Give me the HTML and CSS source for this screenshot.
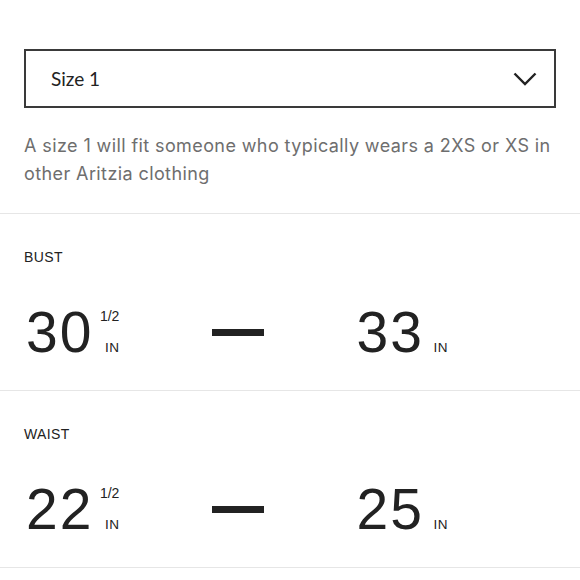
FILE: index.html
```html
<!DOCTYPE html>
<html>
<head>
<meta charset="utf-8">
<link rel="stylesheet" href="styles.css">
</head>
<body>
<div class="top">
  <div class="select">
    <span class="select-label">Size 1</span>
    <svg class="chevron" width="24" height="14" viewBox="0 0 24 14"><path d="M1.5 1.5 L12 12 L22.5 1.5" fill="none" stroke="#222" stroke-width="2.4"/></svg>
  </div>
  <p class="desc">A size 1 will fit someone who typically wears a 2XS or XS in other Aritzia clothing</p>
</div>
<section class="measure">
  <div class="label">BUST</div>
  <div class="row">
    <div class="value">
      <span class="num">30</span>
      <span class="frac"><span class="half">1/2</span><span class="unit">IN</span></span>
    </div>
    <div class="dash"></div>
    <div class="value value-right">
      <span class="num">33</span>
      <span class="frac"><span class="half"></span><span class="unit">IN</span></span>
    </div>
  </div>
</section>
<section class="measure">
  <div class="label">WAIST</div>
  <div class="row">
    <div class="value">
      <span class="num">22</span>
      <span class="frac"><span class="half">1/2</span><span class="unit">IN</span></span>
    </div>
    <div class="dash"></div>
    <div class="value value-right">
      <span class="num">25</span>
      <span class="frac"><span class="half"></span><span class="unit">IN</span></span>
    </div>
  </div>
</section>
</body>
</html>
```
FILE: styles.css
```css
html, body {
  margin: 0;
  padding: 0;
  background: #fff;
}
body {
  font-family: "Liberation Sans", Arial, sans-serif;
  color: #222;
}
.top {
  padding: 49px 24px 0;
}
.select {
  box-sizing: border-box;
  height: 59px;
  border: 2px solid #3a3a3a;
  display: flex;
  align-items: center;
  justify-content: space-between;
  padding: 0 17px 0 25px;
}
.select-label {
  font-family: Lato, "Liberation Sans", sans-serif;
  font-size: 19px;
  color: #222;
}
.chevron {
  display: block;
}
.desc {
  margin: 24px 0 0;
  padding-bottom: 25px;
  font-family: Inter, "Liberation Sans", sans-serif;
  font-size: 18px;
  letter-spacing: 0.4px;
  line-height: 28px;
  color: #6e6e6e;
}
.measure {
  border-top: 1px solid #e6e6e6;
  padding: 35px 24px 29px;
}
.measure:last-child {
  border-bottom: 1px solid #e6e6e6;
}
.label {
  font-size: 14px;
  line-height: 16px;
  letter-spacing: 0.4px;
  color: #222;
}
.row {
  margin-top: 39px;
  display: grid;
  grid-template-columns: 98px 52px 1fr;
  column-gap: 90px;
  align-items: center;
}
.value {
  display: flex;
  height: 57px;
  padding-left: 2px;
}
.num {
  font-size: 57px;
  line-height: 57px;
  letter-spacing: 2px;
  color: #222;
}
.value-right {
  padding-left: 0;
}
.value-right .num {
  width: 70px;
  text-align: right;
}
.frac {
  display: flex;
  flex-direction: column;
  justify-content: space-between;
  align-items: flex-end;
  width: 20px;
  margin-left: 6px;
  padding: 5px 0 7px;
}
.value-right .frac {
  margin-left: 4px;
}
.half {
  font-size: 14px;
  line-height: 14px;
}
.unit {
  font-size: 13.5px;
  line-height: 13px;
  letter-spacing: 0.5px;
}
.dash {
  height: 7px;
  background: #222;
}
```
